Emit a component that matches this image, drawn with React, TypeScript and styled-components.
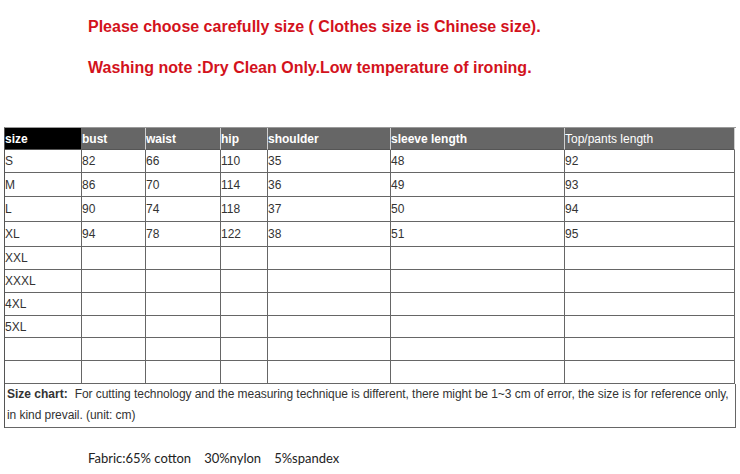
import { FC } from 'react';
import styled, { createGlobalStyle } from 'styled-components';

const GlobalStyle = createGlobalStyle`
  body {
    margin: 0;
    background: #fff;
    font-family: "Liberation Sans", Arial, sans-serif;
  }
`

const Page = styled.div`
  width: 740px;
  height: 474px;
  padding-top: 18px;
  box-sizing: border-box;
  overflow: hidden;
`

const Notice = styled.p`
  margin: 0 0 0 88px;
  font-size: 16px;
  line-height: 18px;
  font-weight: bold;
  color: #d3121c;

  & + & {
    margin-top: 23px;
  }
`

const Chart = styled.div`
  margin: 50px 0 0 4px;
  width: 731px;
  border-left: 1px solid #555;
  border-top: 1px solid #9a9a9a;
  font-size: 12px;
  color: #333;
`

const Row = styled.div<{ $h: number }>`
  display: grid;
  grid-template-columns: 77px 64px 75px 47px 123px 174px 170px;
  height: ${p => p.$h}px;
`

const HeadCell = styled.div<{ $black?: boolean; $plain?: boolean }>`
  display: flex;
  align-items: center;
  box-sizing: border-box;
  background: ${p => (p.$black ? '#000' : '#666')};
  color: #fff;
  font-weight: ${p => (p.$plain ? 'normal' : 'bold')};
  border-right: 1px solid ${p => (p.$black ? '#666' : '#d0d0d0')};
  border-bottom: 1px solid #555;
  white-space: nowrap;
`

const Cell = styled.div`
  display: flex;
  align-items: center;
  box-sizing: border-box;
  border-right: 1px solid #666;
  border-bottom: 1px solid #666;
  white-space: nowrap;
`

const NoteCell = styled.div`
  box-sizing: border-box;
  padding: 0 0 0 2px;
  border-right: 1px solid #666;
  border-bottom: 1px solid #666;
  line-height: 21px;
  height: 44px;
  white-space: nowrap;
  overflow: hidden;
  letter-spacing: -0.06px;
`

const Label = styled.b`
  margin-right: 7px;
  letter-spacing: 0;
`

const Fabric = styled.div`
  display: flex;
  gap: 13px;
  margin: 22px 0 0 88px;
  font-family: Lato, "Open Sans", sans-serif;
  font-size: 13px;
  line-height: 16px;
  color: #222;
`

const headers = ['bust', 'waist', 'hip', 'shoulder', 'sleeve length']

const rows: { size: string; h: number; values: string[] }[] = [
  { size: 'S', h: 23, values: ['82', '66', '110', '35', '48', '92'] },
  { size: 'M', h: 24, values: ['86', '70', '114', '36', '49', '93'] },
  { size: 'L', h: 25, values: ['90', '74', '118', '37', '50', '94'] },
  { size: 'XL', h: 25, values: ['94', '78', '122', '38', '51', '95'] },
  { size: 'XXL', h: 23, values: [] },
  { size: 'XXXL', h: 23, values: [] },
  { size: '4XL', h: 23, values: [] },
  { size: '5XL', h: 22, values: [] },
  { size: '', h: 23, values: [] },
  { size: '', h: 23, values: [] },
]

export const App: FC = () => {
  return (
    <Page>
      <GlobalStyle />
      <Notice>Please choose carefully size ( Clothes size is Chinese size).</Notice>
      <Notice>Washing note :Dry Clean Only.Low temperature of ironing.</Notice>

      <Chart>
        <Row $h={22}>
          <HeadCell $black>size</HeadCell>
          {headers.map(h => (
            <HeadCell key={h}>{h}</HeadCell>
          ))}
          <HeadCell $plain>Top/pants length</HeadCell>
        </Row>

        {rows.map((r, i) => (
          <Row key={i} $h={r.h}>
            <Cell>{r.size}</Cell>
            {Array.from({ length: 6 }).map((_, j) => (
              <Cell key={j}>{r.values[j] ?? ''}</Cell>
            ))}
          </Row>
        ))}

        <NoteCell>
          <Label>Size chart:</Label>
          For cutting technology and the measuring technique is different, there might be 1~3 cm of error, the size is for reference only,
          <br />
          in kind prevail. (unit: cm)
        </NoteCell>
      </Chart>

      <Fabric>
        <span>Fabric:65% cotton</span>
        <span>30%nylon</span>
        <span>5%spandex</span>
      </Fabric>
    </Page>
  )
}

export default App;
